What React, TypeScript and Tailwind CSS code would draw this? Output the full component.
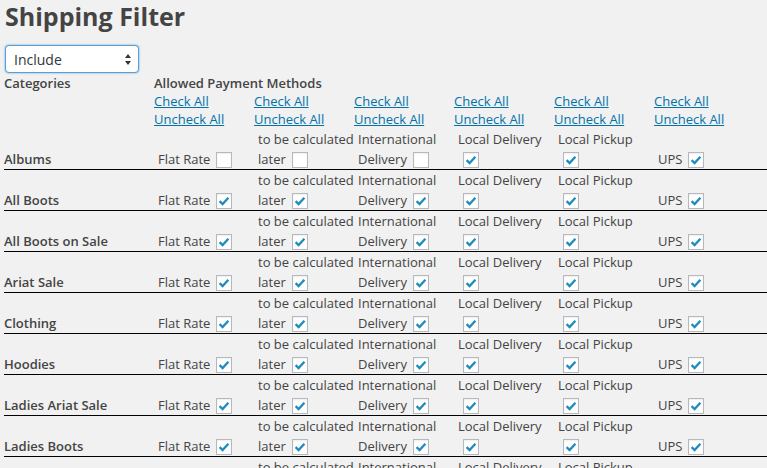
import React from "react";

type Method = { first: string; second: string; wrapBox?: boolean };

const methods: Method[] = [
  { first: "", second: "Flat Rate" },
  { first: "to be calculated", second: "later" },
  { first: "International", second: "Delivery" },
  { first: "Local Delivery", second: "", wrapBox: true },
  { first: "Local Pickup", second: "", wrapBox: true },
  { first: "", second: "UPS" },
];

const categories: { name: string; unchecked: number[] }[] = [
  { name: "Albums", unchecked: [0, 1, 2] },
  { name: "All Boots", unchecked: [] },
  { name: "All Boots on Sale", unchecked: [] },
  { name: "Ariat Sale", unchecked: [] },
  { name: "Clothing", unchecked: [] },
  { name: "Hoodies", unchecked: [] },
  { name: "Ladies Ariat Sale", unchecked: [] },
  { name: "Ladies Boots", unchecked: [] },
  { name: "Mens Boots", unchecked: [] },
];

function Checkbox({ checked, className = "" }: { checked: boolean; className?: string }) {
  return (
    <span
      className={
        "inline-flex h-4 w-4 shrink-0 items-center justify-center self-end border border-[#b4b9be] bg-white shadow-[inset_0_1px_2px_rgba(0,0,0,0.07)] " +
        className
      }
    >
      {checked && (
        <svg width="12" height="12" viewBox="0 0 12 12" fill="none">
          <path
            d="M1.6 6.2 L4.6 9.1 L10.4 2.8"
            stroke="#1e8cbe"
            strokeWidth="2.3"
            strokeLinecap="butt"
            strokeLinejoin="miter"
          />
        </svg>
      )}
    </span>
  );
}

export default function App() {
  return (
    <div className="min-h-screen overflow-hidden bg-[#f1f1f1] pl-1 font-['Open_Sans',sans-serif] text-[13px] text-[#444]">
      <h2 className="pl-px text-[25px] font-bold leading-[32px] text-[#444]">Shipping Filter</h2>

      <div className="ml-px mt-[13px] flex h-[28px] w-[134px] items-center justify-between rounded-[4px] border border-[#5b9dd9] bg-white pl-2 pr-[7px] text-[14px] text-[#32373c] shadow-[0_0_2px_rgba(30,140,190,0.8)]">
        <span>Include</span>
        <svg width="6" height="11" viewBox="0 0 6 11">
          <path d="M3 0 L6 4 L0 4 Z" fill="#333" />
          <path d="M0 7 L6 7 L3 11 Z" fill="#333" />
        </svg>
      </div>

      <div className="mt-px grid grid-cols-[150px_repeat(6,100px)] font-semibold leading-[18px]">
        <div>Categories</div>
        <div className="col-span-6">Allowed Payment Methods</div>
      </div>

      <div className="grid grid-cols-[150px_repeat(6,100px)] pb-px leading-[18px]">
        <div />
        {methods.map((_, i) => (
          <div key={i} className="flex flex-col items-start text-[#0073aa]">
            <a href="#" className="underline">Check All</a>
            <a href="#" className="underline">Uncheck All</a>
          </div>
        ))}
      </div>

      {categories.map((c) => (
        <div
          key={c.name}
          className="grid h-[41px] grid-cols-[150px_repeat(6,100px)] border-b border-black leading-[20px]"
        >
          <div className="flex flex-col justify-end font-semibold">
            <div className="h-[20px]">{c.name}</div>
          </div>
          {methods.map((m, i) => {
            const checked = !c.unchecked.includes(i);
            return (
              <div key={i} className="flex flex-col pl-1">
                <div className="flex h-[20px] whitespace-nowrap">{m.first}</div>
                <div className="flex h-[20px] whitespace-nowrap">
                  {m.wrapBox ? (
                    <Checkbox checked={checked} className="mb-px ml-[5px]" />
                  ) : (
                    <>
                      <span>{m.second}</span>
                      <Checkbox checked={checked} className="mb-px ml-[6px]" />
                    </>
                  )}
                </div>
              </div>
            );
          })}
        </div>
      ))}
    </div>
  );
}
